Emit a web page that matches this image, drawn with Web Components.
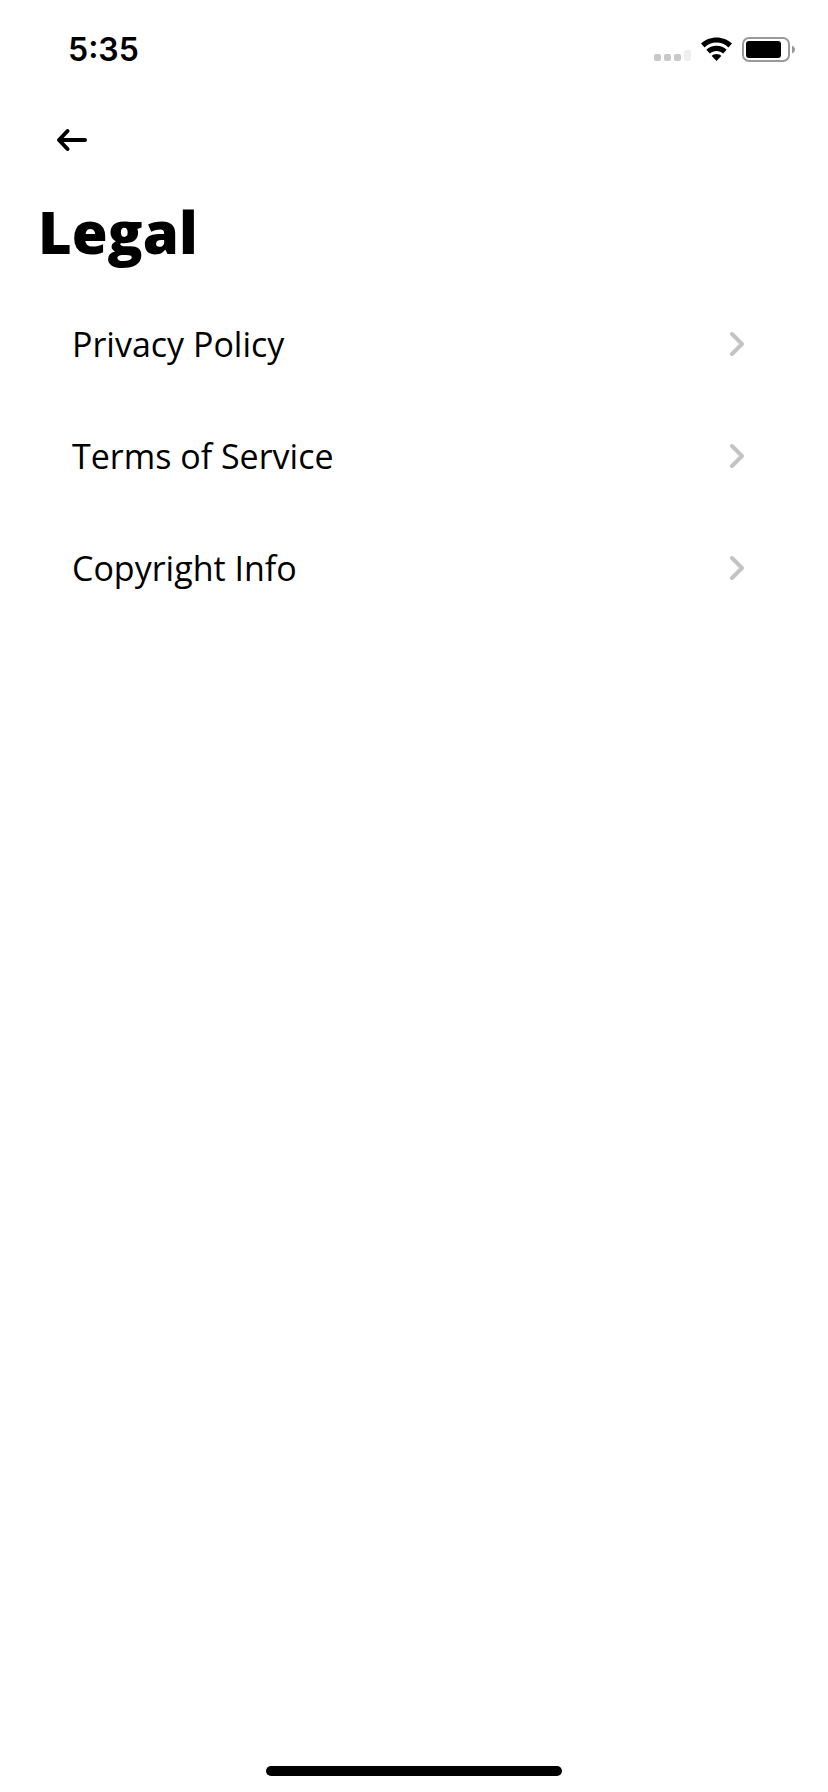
<!DOCTYPE html>
<html lang="en">
<head>
<meta charset="utf-8">
<meta name="viewport" content="width=device-width, initial-scale=1">
<title>Legal</title>
<style>
    body {
        margin: 0;
        background: #fff;
        color: #000;
        font-family: "Open Sans", "Noto Sans", sans-serif;
    }
</style>
</head>
<body>

<template id="status-bar">
    <style>
        :host {
            display: flex;
            align-items: center;
            justify-content: space-between;
            height: 100px;
            padding: 0 32px 0 68px;
            font: 600 32px/40px Inter, sans-serif;
        }
        div {
            display: flex;
            align-items: center;
            gap: 8px;
        }
        svg {
            display: block;
        }
    </style>
    <time><slot></slot></time>
    <div>
        <svg width="40" height="26" viewBox="0 0 40 26" aria-hidden="true">
            <g fill="#c8c8c8">
                <rect x="1" y="17" width="7" height="7" rx="2"/>
                <rect x="11" y="17" width="7" height="7" rx="2"/>
                <rect x="21" y="17" width="7" height="7" rx="2"/>
            </g>
            <rect x="31" y="13" width="7" height="11" rx="2" fill="#efefef"/>
        </svg>
        <svg width="32" height="26" viewBox="0 0 32 26" aria-hidden="true">
            <path d="M15.500.500C9.500.500 4.100 2.800 0 6.600L3.600 10.400C6.700 7.500 10.900 5.600 15.500 5.600S24.300 7.500 27.400 10.400L31 6.600C26.900 2.800 21.500.500 15.500.500Z"/>
            <path d="M15.500 8.800C11.600 8.800 8 10.300 5.300 12.800L8.900 16.600C10.600 15 12.900 14 15.500 14S20.400 15 22.100 16.600L25.700 12.800C23 10.300 19.400 8.800 15.500 8.800Z"/>
            <path d="M15.500 17C13.600 17 11.900 17.700 10.700 18.900L15.500 24 20.300 18.900C19.100 17.700 17.400 17 15.500 17Z"/>
        </svg>
        <svg width="55" height="26" viewBox="0 0 55 26" aria-hidden="true">
            <rect x="2" y="1" width="46" height="23" rx="6" fill="none" stroke="#999" stroke-width="2"/>
            <rect x="5" y="4" width="35" height="17" rx="3"/>
            <path d="M51 8.500c1.800.8 3 2.300 3 4s-1.200 3.200-3 4z" fill="#999"/>
        </svg>
    </div>
</template>

<template id="back-button">
    <style>
        :host {
            display: block;
            padding: 20px 36px;
        }
        button {
            display: grid;
            place-items: center;
            width: 72px;
            height: 40px;
            padding: 0;
            border: 0;
            background: none;
            cursor: pointer;
        }
    </style>
    <button type="button" aria-label="Back">
        <svg width="32" height="24" viewBox="0 0 32 24" fill="none" stroke="#000" stroke-width="4" stroke-linecap="round" stroke-linejoin="round" aria-hidden="true">
            <path d="M29 12H4M11.500 3L3 12 11.500 21"/>
        </svg>
    </button>
</template>

<template id="page-title">
    <style>
        :host {
            display: block;
            padding: 8px 38px 12px;
        }
        h1 {
            margin: 0;
            font-size: 58px;
            font-weight: 800;
            line-height: 88px;
        }
    </style>
    <h1><slot></slot></h1>
</template>

<template id="menu-row">
    <style>
        :host {
            display: block;
        }
        a {
            display: flex;
            align-items: center;
            justify-content: space-between;
            height: 112px;
            padding: 0 80px 0 72px;
            color: inherit;
            font-size: 34px;
            line-height: 48px;
            text-decoration: none;
        }
    </style>
    <a>
        <slot></slot>
        <svg width="18" height="28" viewBox="0 0 18 28" fill="none" stroke="#c4c4c6" stroke-width="4" stroke-linecap="round" stroke-linejoin="round" aria-hidden="true">
            <path d="M2 4L12 14 2 24"/>
        </svg>
    </a>
</template>

<template id="home-indicator">
    <style>
        :host {
            display: flex;
            justify-content: center;
            margin-top: auto;
            padding-bottom: 16px;
        }
        div {
            width: 296px;
            height: 10px;
            border-radius: 5px;
            background: #000;
        }
    </style>
    <div></div>
</template>

<template id="legal-screen">
    <style>
        :host {
            display: flex;
            flex-direction: column;
            min-height: 100vh;
        }
    </style>
    <status-bar>5:35</status-bar>
    <back-button></back-button>
    <page-title>Legal</page-title>
    <nav aria-label="Legal">
        <menu-row href="#privacy">Privacy Policy</menu-row>
        <menu-row href="#terms">Terms of Service</menu-row>
        <menu-row href="#copyright">Copyright Info</menu-row>
    </nav>
    <home-indicator></home-indicator>
</template>

<legal-screen></legal-screen>

<script>
// Every element gets its markup from the template with the same name
class BaseElement extends HTMLElement {
    constructor() {
        super();
        const template = document.getElementById(this.localName);
        this.attachShadow({mode: 'open'});
        this.shadowRoot.appendChild(template.content.cloneNode(true));
    }
}

class StatusBar extends BaseElement {}
class PageTitle extends BaseElement {}
class HomeIndicator extends BaseElement {}
class LegalScreen extends BaseElement {}

class BackButton extends BaseElement {
    connectedCallback() {
        this.shadowRoot.querySelector('button').onclick = () => history.back();
    }
}

class MenuRow extends BaseElement {
    static get observedAttributes() {
        return ['href'];
    }

    attributeChangedCallback(name, oldValue, newValue) {
        this.shadowRoot.querySelector('a').setAttribute('href', newValue || '#');
    }
}

customElements.define('status-bar', StatusBar);
customElements.define('back-button', BackButton);
customElements.define('page-title', PageTitle);
customElements.define('menu-row', MenuRow);
customElements.define('home-indicator', HomeIndicator);
customElements.define('legal-screen', LegalScreen);
</script>
</body>
</html>
